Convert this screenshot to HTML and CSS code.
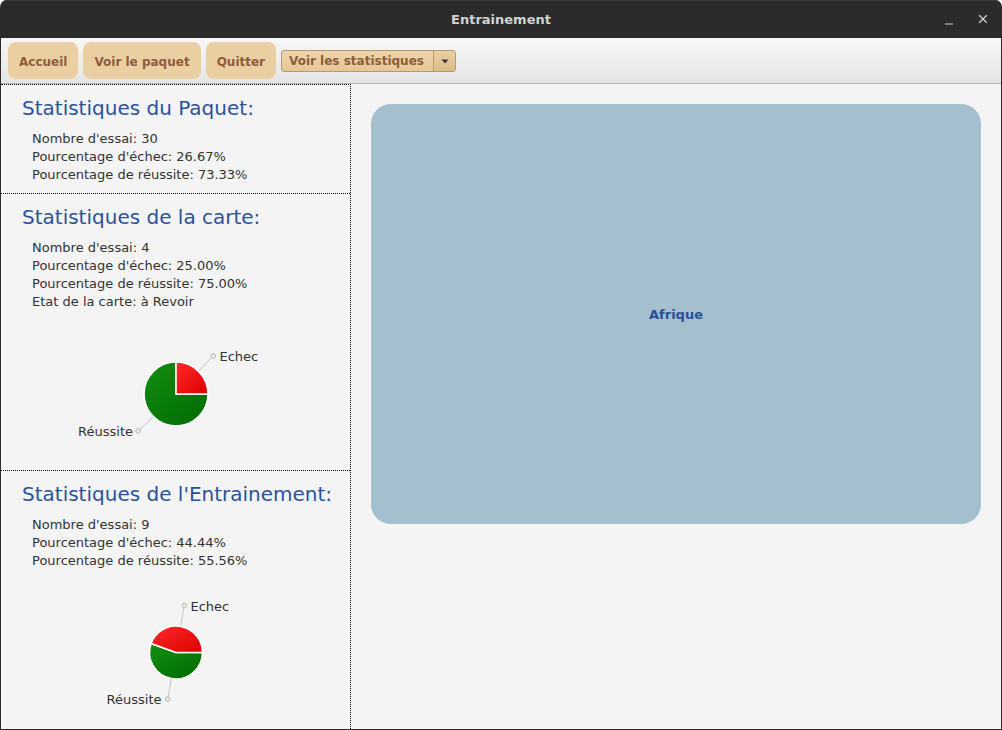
FILE: index.html
```html
<!DOCTYPE html>
<html lang="fr">
<head>
<meta charset="utf-8">
<title>Entrainement</title>
<link rel="stylesheet" href="styles.css">
</head>
<body>
<div class="window">
  <div class="titlebar">
    <span></span>
    <span class="title">Entrainement</span>
    <div class="controls">
      <svg class="ctl" width="10" height="10" viewBox="0 0 10 10"><line x1="1" y1="8" x2="9" y2="8" stroke="#cfcfcf" stroke-width="1.2"/></svg>
      <svg class="ctl" width="10" height="10" viewBox="0 0 10 10"><path d="M1.2 1.2 L8.8 8.8 M8.8 1.2 L1.2 8.8" stroke="#cfcfcf" stroke-width="1.3" fill="none"/></svg>
    </div>
  </div>
  <div class="toolbar">
    <button class="btn">Accueil</button>
    <button class="btn">Voir le paquet</button>
    <button class="btn">Quitter</button>
    <div class="combo">
      <span class="combo-text">Voir les statistiques</span>
      <span class="combo-arrow"><svg width="8" height="5" viewBox="0 0 8 5"><path d="M0.5 0.5 L7.5 0.5 L4 4.5 Z" fill="#3a3a3a"/></svg></span>
    </div>
  </div>
  <div class="main">
    <div class="left">
      <section class="sec">
        <h2 class="sec-title">Statistiques du Paquet:</h2>
        <div class="lines">
          <div>Nombre d'essai: 30</div>
          <div>Pourcentage d'échec: 26.67%</div>
          <div>Pourcentage de réussite: 73.33%</div>
        </div>
      </section>
      <section class="sec">
        <h2 class="sec-title">Statistiques de la carte:</h2>
        <div class="lines">
          <div>Nombre d'essai: 4</div>
          <div>Pourcentage d'échec: 25.00%</div>
          <div>Pourcentage de réussite: 75.00%</div>
          <div>Etat de la carte: à Revoir</div>
        </div>
        <svg class="chart" width="349" height="159" viewBox="1 311 349 159">
          <defs>
            <linearGradient id="gr" x1="0" y1="0" x2="1" y2="1">
              <stop offset="0" stop-color="#ff2a2a"/>
              <stop offset="1" stop-color="#dd0000"/>
            </linearGradient>
            <linearGradient id="gg" x1="0" y1="0" x2="1" y2="1">
              <stop offset="0" stop-color="#138e13"/>
              <stop offset="1" stop-color="#006a00"/>
            </linearGradient>
          </defs>
          <line x1="198.6" y1="371.4" x2="213" y2="356" class="lead"/>
          <circle cx="213.3" cy="356" r="2.3" class="dot"/>
          <line x1="153.4" y1="416.6" x2="138.5" y2="431" class="lead"/>
          <circle cx="138.3" cy="431" r="2.3" class="dot"/>
          <path d="M176 394 L176 362 A32 32 0 1 0 208 394 Z" fill="url(#gg)" class="slice"/>
          <path d="M176 394 L208 394 A32 32 0 0 0 176 362 Z" fill="url(#gr)" class="slice"/>
          <text x="219.5" y="360.7" class="lbl">Echec</text>
          <text x="133" y="435.7" class="lbl" text-anchor="end">Réussite</text>
        </svg>
      </section>
      <section class="sec sec-last">
        <h2 class="sec-title">Statistiques de l'Entrainement:</h2>
        <div class="lines">
          <div>Nombre d'essai: 9</div>
          <div>Pourcentage d'échec: 44.44%</div>
          <div>Pourcentage de réussite: 55.56%</div>
        </div>
        <svg class="chart" width="349" height="159" viewBox="1 570 349 159">
          <defs>
            <linearGradient id="gr2" x1="0" y1="0" x2="1" y2="1">
              <stop offset="0" stop-color="#ff2a2a"/>
              <stop offset="1" stop-color="#dd0000"/>
            </linearGradient>
            <linearGradient id="gg2" x1="0" y1="0" x2="1" y2="1">
              <stop offset="0" stop-color="#138e13"/>
              <stop offset="1" stop-color="#006a00"/>
            </linearGradient>
          </defs>
          <line x1="180.6" y1="626.4" x2="184.2" y2="605.5" class="lead"/>
          <circle cx="184.3" cy="605.5" r="2.3" class="dot"/>
          <line x1="171.4" y1="678.6" x2="167.8" y2="699" class="lead"/>
          <circle cx="167.7" cy="699.2" r="2.3" class="dot"/>
          <path d="M176 652.5 L151.1 643.4 A26.5 26.5 0 1 0 202.5 652.5 Z" fill="url(#gg2)" class="slice"/>
          <path d="M176 652.5 L202.5 652.5 A26.5 26.5 0 0 0 151.1 643.4 Z" fill="url(#gr2)" class="slice"/>
          <text x="190.5" y="610.5" class="lbl">Echec</text>
          <text x="161.5" y="704" class="lbl" text-anchor="end">Réussite</text>
        </svg>
      </section>
    </div>
    <div class="right">
      <div class="card">Afrique</div>
    </div>
  </div>
</div>
</body>
</html>
```

FILE: styles.css
```css
* { box-sizing: border-box; }
html, body { margin: 0; padding: 0; background: #ffffff; }
body { font-family: "DejaVu Sans", "Liberation Sans", sans-serif; }

.window {
  width: 1002px;
  height: 730px;
  background: #2b2b2b;
  border-radius: 7px 7px 0 0;
  overflow: hidden;
  display: flex;
  flex-direction: column;
  padding: 0 1px 1px 1px;
}

.titlebar {
  height: 38px;
  flex: 0 0 38px;
  display: grid;
  grid-template-columns: 1fr auto 1fr;
  align-items: center;
  border-top: 1px solid #3a3a3a;
  margin: 0 -1px;
}
.title {
  color: #d2d2d2;
  font-weight: bold;
  font-size: 13px;
  padding-bottom: 1px;
}
.controls {
  justify-self: end;
  display: flex;
  align-items: center;
  gap: 24px;
  padding-right: 14px;
  padding-bottom: 1px;
}
.ctl { display: block; }
.ctl:first-child { margin-top: 3px; }

.toolbar {
  flex: 0 0 46px;
  height: 46px;
  background: linear-gradient(#f7f7f7, #e5e5e5);
  border-bottom: 1px solid #b6b6b6;
  display: flex;
  align-items: center;
  gap: 5px;
  padding: 0 0 0 7px;
}
.btn {
  height: 37px;
  padding: 2px 11px 0 11px;
  border: none;
  border-radius: 8px;
  background: #eacfa3;
  color: #8e5c3c;
  font-family: "DejaVu Sans", sans-serif;
  font-weight: bold;
  font-size: 12px;
}
.combo {
  height: 22px;
  display: flex;
  align-items: stretch;
  border: 1px solid #b7996b;
  border-radius: 3px;
  background: linear-gradient(#eed5ab, #e4c795);
  color: #8e5c3c;
  font-weight: bold;
  font-size: 12px;
  margin-top: 1px;
}
.combo-text {
  width: 151px;
  padding-left: 7px;
  line-height: 20px;
}
.combo-arrow {
  width: 22px;
  border-left: 1px solid #b7996b;
  background: linear-gradient(#e9cfa2, #d9bc8a);
  display: flex;
  align-items: center;
  justify-content: center;
  border-radius: 0 2px 2px 0;
}

.main {
  flex: 1;
  display: flex;
  background: #f4f4f4;
  min-height: 0;
}
.left {
  width: 350px;
  flex: 0 0 350px;
  border-top: 1px dotted #000;
  border-right: 1px dotted #000;
  display: flex;
  flex-direction: column;
}
.sec {
  padding: 11px 0 9px 21px;
  border-bottom: 1px dotted #000;
  display: flex;
  flex-direction: column;
}
.sec:nth-child(2) { padding-bottom: 0; }
.sec-last {
  border-bottom: none;
  flex: 1;
  padding-bottom: 0;
}
.sec-title {
  margin: 0 0 10px 0;
  font-weight: normal;
  font-size: 20px;
  line-height: 24px;
  color: #2a529c;
  white-space: nowrap;
}
.lines {
  padding-left: 10px;
  font-size: 13px;
  line-height: 18px;
  color: #333333;
}
.chart {
  display: block;
  margin-left: -21px;
}
.lead { stroke: #c4c4c4; stroke-width: 1; }
.dot { fill: #ececec; stroke: #b8b8b8; stroke-width: 1; }
.slice { stroke: #ffffff; stroke-width: 1.6; stroke-linejoin: round; }
.lbl {
  font-family: "DejaVu Sans", sans-serif;
  font-size: 13px;
  fill: #333333;
}

.right {
  flex: 1;
  padding: 20px;
}
.card {
  height: 420px;
  border-radius: 20px;
  background: #a4bfcd;
  display: flex;
  align-items: center;
  justify-content: center;
  color: #2a4f9a;
  font-weight: bold;
  font-size: 13px;
}
```
